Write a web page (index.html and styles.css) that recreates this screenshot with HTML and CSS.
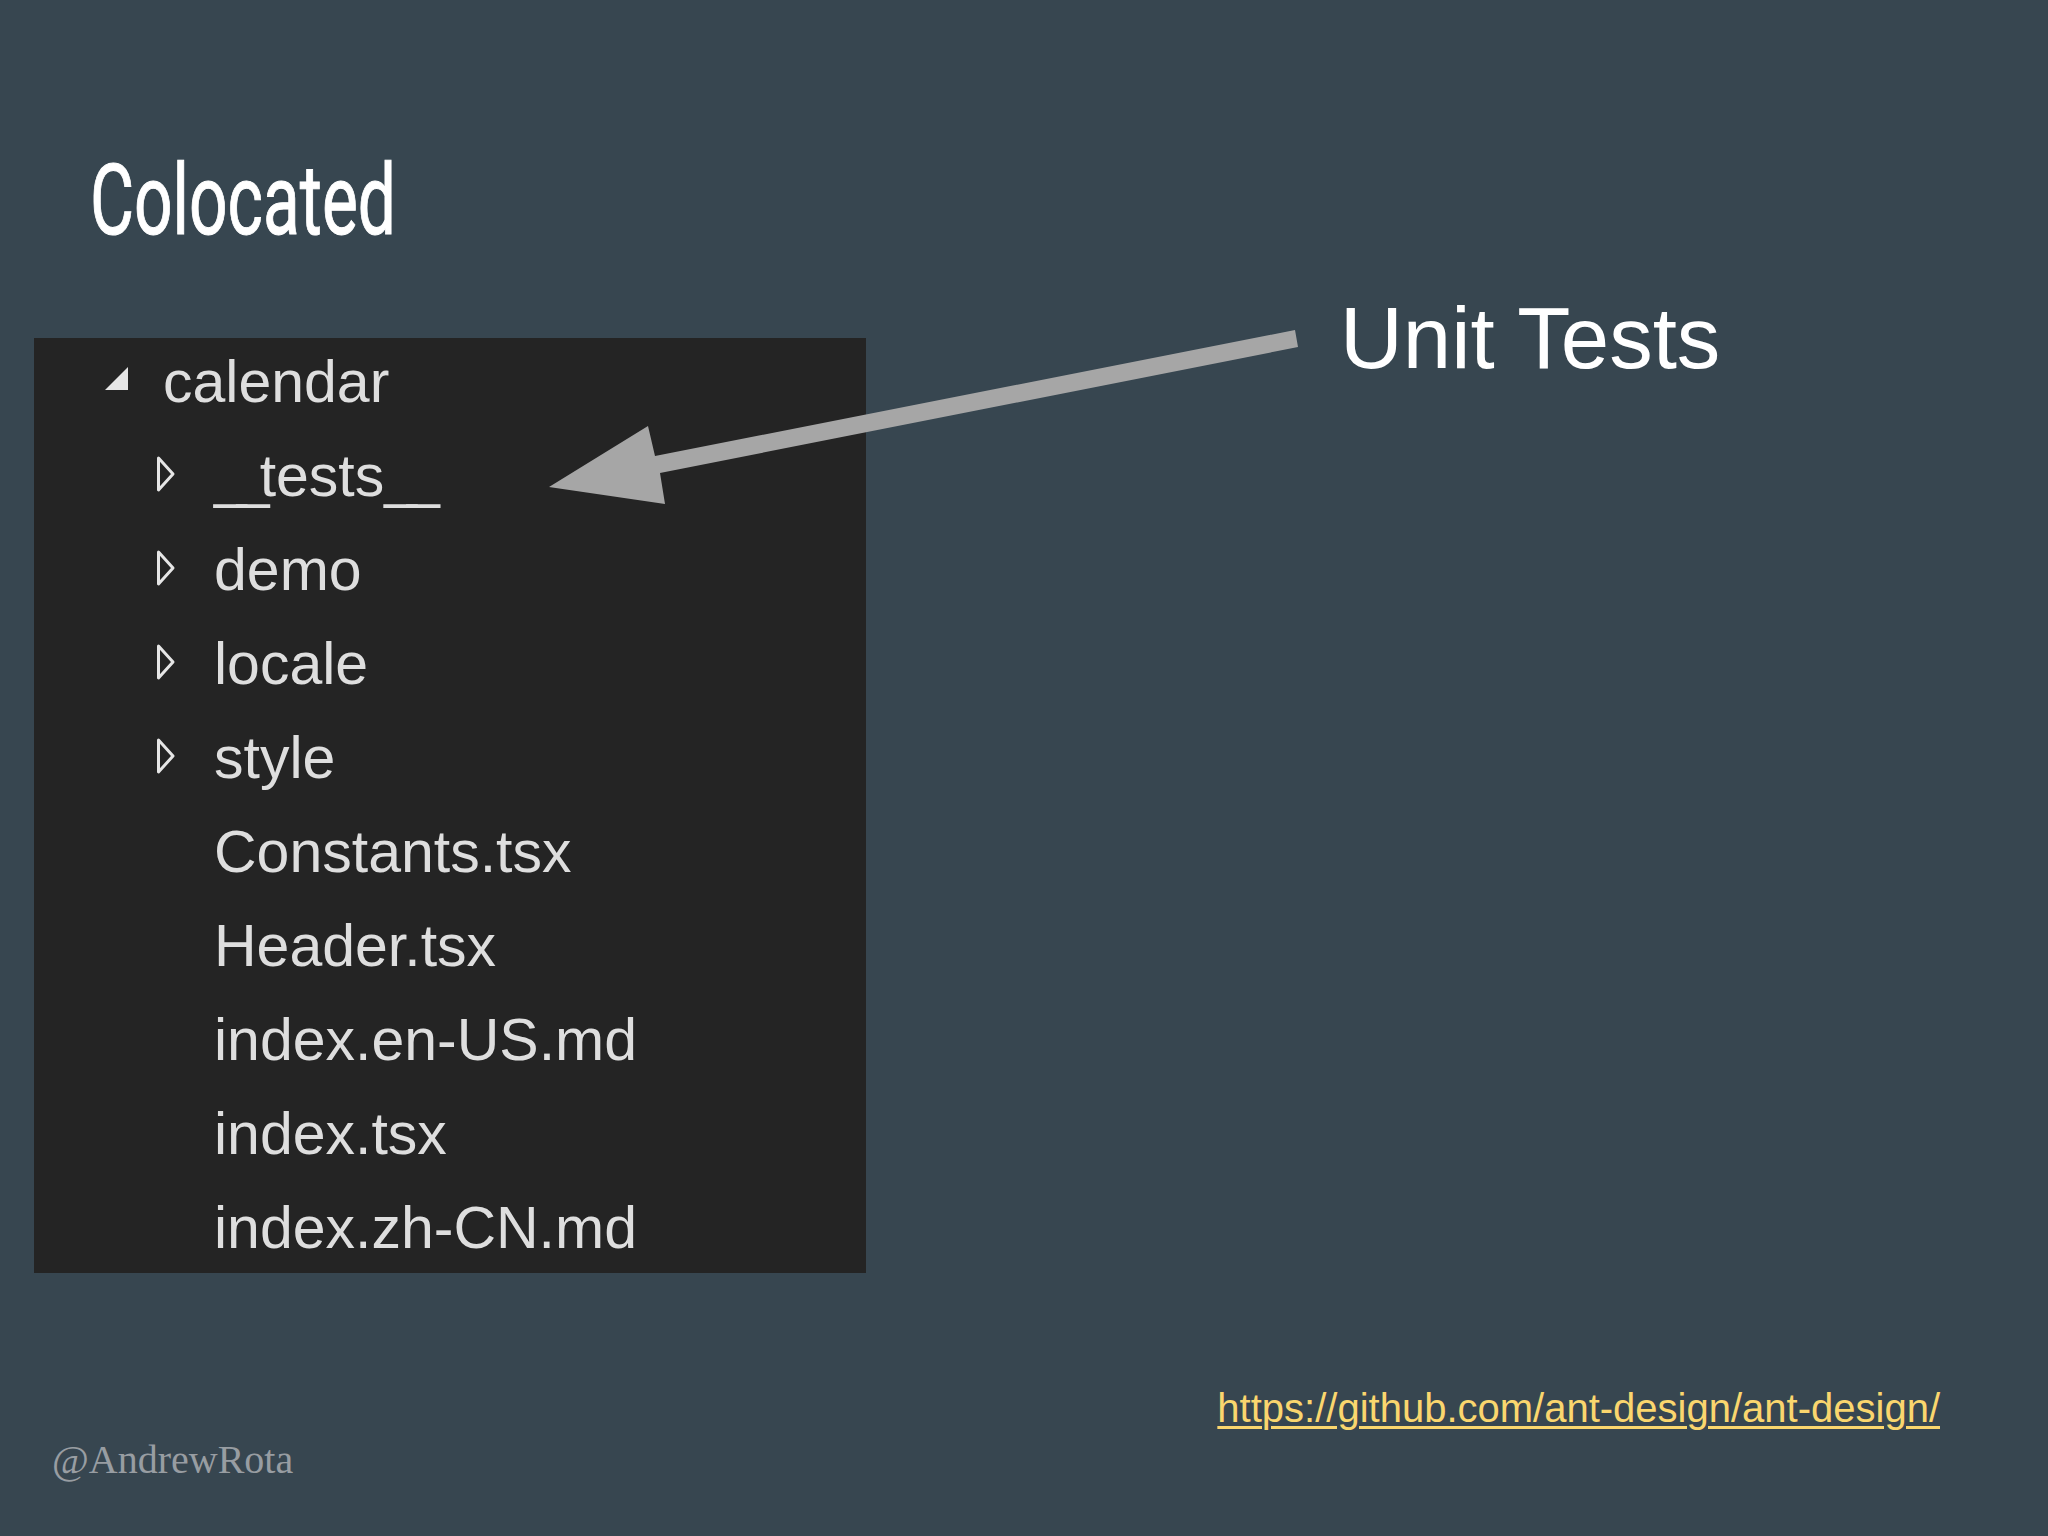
FILE: index.html
```html
<!DOCTYPE html>
<html lang="en">
<head>
<meta charset="utf-8">
<title>Colocated</title>
<link rel="stylesheet" href="styles.css">
</head>
<body>
<div class="slide">
  <h1 class="title"><span class="title-text">Colocated</span></h1>
  <div class="content">
    <ul class="tree">
      <li class="row row-root"><span class="twisty twisty-root"><svg width="23" height="23" viewBox="0 0 23 23"><polygon points="0,23 23,0 23,23" fill="#e6e6e6"/></svg></span><span class="label">calendar</span></li>
      <li class="row row-child"><span class="twisty"><svg width="20" height="38" viewBox="0 0 20 38"><polygon points="2.5,3 17,19 2.5,35" fill="none" stroke="#e6e6e6" stroke-width="3" stroke-linejoin="round"/></svg></span><span class="label"><span class="us">__</span>tests<span class="us">__</span></span></li>
      <li class="row row-child"><span class="twisty"><svg width="20" height="38" viewBox="0 0 20 38"><polygon points="2.5,3 17,19 2.5,35" fill="none" stroke="#e6e6e6" stroke-width="3" stroke-linejoin="round"/></svg></span><span class="label">demo</span></li>
      <li class="row row-child"><span class="twisty"><svg width="20" height="38" viewBox="0 0 20 38"><polygon points="2.5,3 17,19 2.5,35" fill="none" stroke="#e6e6e6" stroke-width="3" stroke-linejoin="round"/></svg></span><span class="label">locale</span></li>
      <li class="row row-child"><span class="twisty"><svg width="20" height="38" viewBox="0 0 20 38"><polygon points="2.5,3 17,19 2.5,35" fill="none" stroke="#e6e6e6" stroke-width="3" stroke-linejoin="round"/></svg></span><span class="label">style</span></li>
      <li class="row row-child"><span class="twisty"></span><span class="label">Constants.tsx</span></li>
      <li class="row row-child"><span class="twisty"></span><span class="label">Header.tsx</span></li>
      <li class="row row-child"><span class="twisty"></span><span class="label">index.en-US.md</span></li>
      <li class="row row-child"><span class="twisty"></span><span class="label">index.tsx</span></li>
      <li class="row row-child"><span class="twisty"></span><span class="label">index.zh-CN.md</span></li>
    </ul>
    <div class="callout">Unit Tests</div>
  </div>
  <div class="footer">
    <span class="handle">@AndrewRota</span>
    <a class="link" href="#">https://github.com/ant-design/ant-design/</a>
  </div>
  <svg class="arrow" width="2048" height="1536" viewBox="0 0 2048 1536">
    <polygon points="1295,330 1298,347 660,473 665,504 549,487 648,426 655,456" fill="#a6a6a6"/>
  </svg>
</div>
</body>
</html>
```

FILE: styles.css
```css
html, body {
  margin: 0;
  padding: 0;
}

body {
  background: #374650;
}

.slide {
  position: relative;
  width: 2048px;
  height: 1536px;
  box-sizing: border-box;
  padding-top: 152px;
  overflow: hidden;
  background: #374650;
}

.title {
  margin: 0;
  padding-left: 90px;
  height: 98px;
  font-family: Roboto, "Liberation Sans", sans-serif;
  font-weight: 400;
  font-size: 98px;
  line-height: 1;
  color: #ffffff;
  -webkit-text-stroke: 1px #ffffff;
}

.title-text {
  display: inline-block;
  transform: scaleX(0.69);
  transform-origin: left center;
}

.content {
  display: flex;
  align-items: flex-start;
  margin-top: 44px;
}

.tree {
  list-style: none;
  margin: 44px 0 0 34px;
  padding: 0;
  width: 832px;
  height: 935px;
  overflow: hidden;
  background: #242424;
  font-family: "Liberation Sans", Arial, sans-serif;
  font-size: 59px;
  color: #dedede;
}

.row {
  display: flex;
  align-items: flex-start;
  height: 94px;
  line-height: 88px;
  white-space: nowrap;
}

.row:first-child {
  height: 93.5px;
}

.row-root {
  padding-left: 71px;
}

.row-child {
  padding-left: 122px;
}

.twisty {
  flex: none;
  display: block;
  width: 20px;
  height: 38px;
  margin-top: 23.5px;
  margin-right: 38px;
}

.twisty svg {
  display: block;
}

.twisty-root {
  width: 23px;
  height: 23px;
  margin-top: 28.5px;
  margin-right: 35px;
}

.us {
  letter-spacing: -10px;
}

.callout {
  margin-left: 474px;
  font-family: "Liberation Sans", Arial, sans-serif;
  font-size: 87px;
  line-height: 1;
  color: #ffffff;
  white-space: nowrap;
}

.footer {
  display: flex;
  justify-content: space-between;
  align-items: flex-start;
  margin-top: 115px;
  padding: 0 108px 0 52px;
}

.handle {
  margin-top: 51.5px;
  font-family: "Liberation Serif", "Times New Roman", serif;
  font-size: 40px;
  line-height: 1;
  color: #989da2;
}

.link {
  font-family: "Liberation Sans", Arial, sans-serif;
  font-size: 40px;
  line-height: 1;
  color: #fad66e;
  text-decoration: underline;
  text-decoration-thickness: 3px;
  text-underline-offset: 4px;
}

.arrow {
  position: absolute;
  top: 0;
  left: 0;
  pointer-events: none;
}
```
